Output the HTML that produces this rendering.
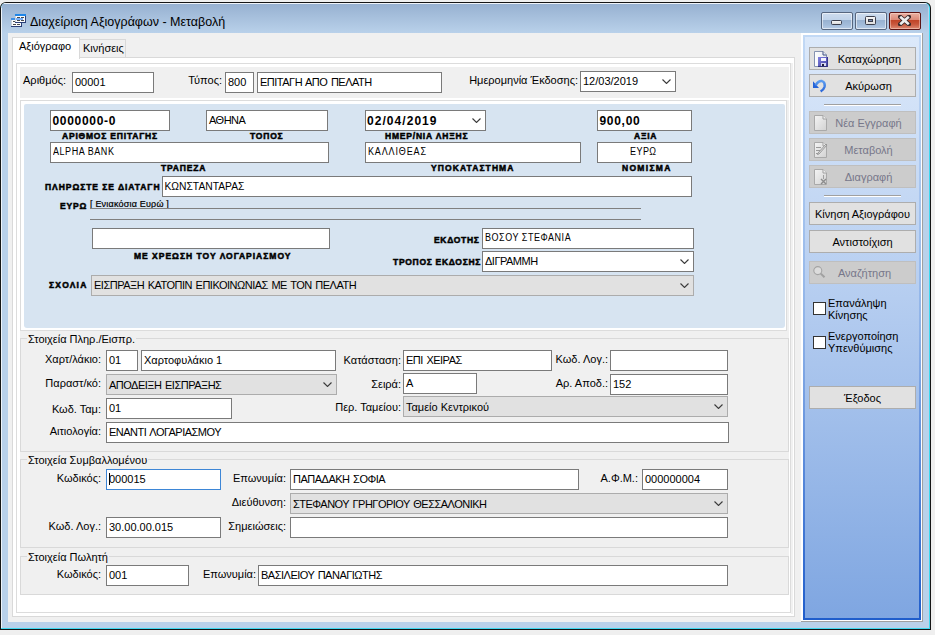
<!DOCTYPE html>
<html><head><meta charset="utf-8">
<style>
*{margin:0;padding:0;box-sizing:border-box}
html,body{width:935px;height:635px;overflow:hidden;background:#efefef;font-family:"Liberation Sans",sans-serif;font-size:11px;color:#000}
.a{position:absolute}
.t{position:absolute;white-space:nowrap;line-height:13px;font-size:11px}
.in{position:absolute;background:#fff;border:1px solid #7a7a7a;white-space:nowrap;font-size:11px;line-height:19px;padding-left:2px;overflow:hidden}
.cb{position:absolute;background:#e1e1e1;border:1px solid #acacac;white-space:nowrap;font-size:11px;line-height:21px;padding-left:2px;overflow:hidden}
.uc{letter-spacing:-0.5px;word-spacing:1px}
.chev{position:absolute;right:4px;top:7px;width:9px;height:5px}
.bl{position:absolute;white-space:nowrap;font-weight:bold;font-size:8.5px;letter-spacing:0.8px;line-height:10px;-webkit-text-stroke:0.5px #000}
.btn{position:absolute;left:809px;width:107px;height:23px;background:#e1e1e1;border:1px solid #adadad;text-align:center;line-height:21px;font-size:11px}
.dis{background:#cccccc;border-color:#bfbfbf;color:#77778a}
.gb{position:absolute;border:1px solid #d9d9d9}
.gt{position:absolute;background:#f0f0f0;padding:0 1px;line-height:13px;white-space:nowrap}
</style></head><body>
<!-- window frame -->
<div class="a" style="left:0;top:2px;width:931px;height:628px;background:#161616;border-radius:6px 6px 0 0"></div>
<div class="a" style="left:1px;top:3px;width:929px;height:626px;background:#3fd8f0;border-radius:5px 5px 0 0"></div>
<div class="a" style="left:1px;top:3px;width:928px;height:625px;background:#b9d1ea;border-radius:5px 5px 0 0"></div>
<div class="a" style="left:1px;top:8px;width:1px;height:620px;background:#eef4fa"></div>
<div class="a" style="left:2px;top:3px;width:926px;height:30px;background:linear-gradient(#eef3f9 0,#eef3f9 1px,#97b1d1 1px,#b9d1ea 100%);border-radius:4px 4px 0 0"></div>
<!-- title -->
<svg class="a" style="left:11px;top:14px" width="16" height="13" viewBox="0 0 16 13">
 <rect x="0" y="4" width="11" height="9" fill="#2a3f78"/>
 <rect x="0" y="4" width="10" height="8" fill="#fbfcfd"/>
 <rect x="0" y="4" width="1" height="8" fill="#c9d2dc"/>
 <rect x="0" y="4" width="10" height="2" fill="#3d8fe6"/>
 <rect x="2" y="7" width="2" height="1" fill="#4a4a4a"/>
 <rect x="2" y="10" width="3" height="1" fill="#4a4a4a"/><rect x="6" y="10" width="3" height="1" fill="#4a4a4a"/>
 <rect x="4" y="0" width="11" height="9" fill="#2a3f78"/>
 <rect x="4" y="0" width="10" height="8" fill="#fbfcfd"/>
 <rect x="4" y="0" width="1" height="8" fill="#c9d2dc"/>
 <rect x="4" y="0" width="11" height="2" fill="#1f86e8"/>
 <rect x="6" y="3" width="3" height="1" fill="#4a4a4a"/><rect x="10" y="3" width="3" height="1" fill="#4a4a4a"/>
 <rect x="5" y="4" width="7" height="2" fill="#7ab0f5"/>
 <rect x="6" y="6" width="3" height="1" fill="#4a4a4a"/><rect x="10" y="6" width="3" height="1" fill="#4a4a4a"/>
</svg>
<div class="t" style="left:30px;top:14px;font-size:12.5px;line-height:16px;color:#000">Διαχείριση Αξιογράφων - Μεταβολή</div>
<!-- caption buttons -->
<div class="a" style="left:821px;top:12px;width:32px;height:18px;border:1px solid #56667f;border-radius:2px;background:linear-gradient(#cddcee 0,#c0d3ea 44%,#97b1d0 44%,#a3bcda 75%,#b6cce6 100%);box-shadow:inset 0 0 0 1px rgba(255,255,255,.55)"></div>
<div class="a" style="left:831px;top:20px;width:11px;height:5px;background:linear-gradient(#f4f4f4,#dcdcdc);border:1px solid #3c3f4c;border-radius:1.5px"></div>
<div class="a" style="left:855px;top:12px;width:32px;height:18px;border:1px solid #56667f;border-radius:2px;background:linear-gradient(#cddcee 0,#c0d3ea 44%,#97b1d0 44%,#a3bcda 75%,#b6cce6 100%);box-shadow:inset 0 0 0 1px rgba(255,255,255,.55)"></div>
<div class="a" style="left:865px;top:16px;width:11px;height:9px;background:linear-gradient(#f6f6f6,#dedede);border:1px solid #3c3f4c;border-radius:1.5px"></div>
<div class="a" style="left:868px;top:19px;width:5px;height:3px;background:#7b8db0;border:1px solid #3c3f4c"></div>
<div class="a" style="left:889px;top:12px;width:32px;height:18px;border:1px solid #5c1414;border-radius:2px;background:linear-gradient(#eab0a2 0,#dc8a78 42%,#bf4124 42%,#c8563c 70%,#dc8a74 100%);box-shadow:inset 0 0 0 1px rgba(255,230,220,.45)"></div>
<svg class="a" style="left:898px;top:15px" width="13" height="11" viewBox="0 0 13 11"><path d="M2.2 1.8 L10.8 9.2 M10.8 1.8 L2.2 9.2" stroke="#3a2a2a" stroke-width="4.4" stroke-linecap="round"/><path d="M2.2 1.8 L10.8 9.2 M10.8 1.8 L2.2 9.2" stroke="#eeeeee" stroke-width="2.6"/></svg>
<div class="a" style="left:8px;top:33px;width:915px;height:589px;background:#f0f0f0"></div>
<div class="a" style="left:79px;top:39px;width:47px;height:19px;background:#f0f0f0;border:1px solid #d9d9d9;border-bottom:none"></div>
<div class="t" style="left:83px;top:42px;">Κινήσεις</div>
<div class="a" style="left:12px;top:57px;width:783px;height:560px;background:#fff;border:1px solid #d9d9d9"></div>
<div class="a" style="left:12px;top:37px;width:68px;height:22px;background:#fff;border:1px solid #d9d9d9;border-bottom:none"></div>
<div class="t" style="left:19px;top:40px;">Αξιόγραφο</div>
<div class="a" style="left:16px;top:63px;width:775px;height:550px;border:1px solid #dcdcdc"></div>
<div class="a" style="left:791px;top:63px;width:2px;height:551px;background:#f1f1f1"></div>
<div class="a" style="left:20px;top:67px;width:769px;height:31px;background:#f0f0f0"></div>
<div class="t" style="left:-134px;top:74px;width:200px;text-align:right;">Αριθμός:</div>
<div class="in" style="left:72px;top:72px;width:82px;height:21px;">00001</div>
<div class="t" style="left:22px;top:74px;width:200px;text-align:right;">Τύπος:</div>
<div class="in" style="left:225px;top:72px;width:29px;height:21px;">800</div>
<div class="in uc" style="left:257px;top:72px;width:185px;height:21px;">ΕΠΙΤΑΓΗ ΑΠΟ ΠΕΛΑΤΗ</div>
<div class="t" style="left:378px;top:74px;width:200px;text-align:right;">Ημερομηνία Έκδοσης:</div>
<div class="in" style="left:580px;top:71px;width:96px;height:21px;">12/03/2019<svg class="chev" width="9" height="5" viewBox="0 0 9 5"><path d="M0.5 0.5 L4.5 4.5 L8.5 0.5" fill="none" stroke="#3a3a3a" stroke-width="1.1"/></svg></div>
<div class="a" style="left:787px;top:100px;width:2px;height:231px;background:#f0f0f0"></div>
<div class="a" style="left:20px;top:100px;width:767px;height:231px;border:1px solid #dcdcdc"></div>
<div class="a" style="left:24px;top:104px;width:761px;height:224px;background:#d7e4f1;border-radius:2px 2px 3px 3px"></div>
<div class="in" style="left:50px;top:110px;width:120px;height:21px;font-weight:bold;font-size:12px;letter-spacing:0.7px;padding-left:1.5px;line-height:21px">0000000-0</div>
<div class="bl" style="left:62px;top:131px;">ΑΡΙΘΜΟΣ ΕΠΙΤΑΓΗΣ</div>
<div class="in uc" style="left:206px;top:110px;width:122px;height:21px;">ΑΘΗΝΑ</div>
<div class="bl" style="left:250px;top:131px;">ΤΟΠΟΣ</div>
<div class="in" style="left:365px;top:110px;width:121px;height:21px;font-weight:bold;font-size:12px;letter-spacing:0.7px;padding-left:1.5px;line-height:21px;letter-spacing:1.05px;padding-left:1px">02/04/2019<svg class="chev" width="9" height="5" viewBox="0 0 9 5"><path d="M0.5 0.5 L4.5 4.5 L8.5 0.5" fill="none" stroke="#3a3a3a" stroke-width="1.1"/></svg></div>
<div class="bl" style="left:385px;top:131px;">ΗΜΕΡ/ΝΙΑ ΛΗΞΗΣ</div>
<div class="in" style="left:597px;top:110px;width:95px;height:21px;font-weight:bold;font-size:12px;letter-spacing:0.7px;padding-left:1.5px;line-height:21px">900,00</div>
<div class="bl" style="left:634px;top:131px;">ΑΞΙΑ</div>
<div class="in" style="left:50px;top:142px;width:279px;height:21px;font-size:10px;line-height:17px"><span style="display:inline-block;transform:scaleX(0.9);transform-origin:0 0;letter-spacing:0.6px">ALPHA BANK</span></div>
<div class="bl" style="left:161px;top:163px;">ΤΡΑΠΕΖΑ</div>
<div class="in" style="left:365px;top:142px;width:216px;height:21px;font-size:10px;line-height:17px;padding-left:1.5px"><span style="display:inline-block;transform:scaleX(0.9);transform-origin:0 0;letter-spacing:0.95px">ΚΑΛΛΙΘΕΑΣ</span></div>
<div class="bl" style="left:431px;top:163px;letter-spacing:1.1px">ΥΠΟΚΑΤΑΣΤΗΜΑ</div>
<div class="in" style="left:597px;top:142px;width:95px;height:21px;font-size:10px;line-height:17px;text-align:center;padding:0 0 0 0"><span style="display:inline-block;transform:scaleX(0.9);transform-origin:0 0;letter-spacing:0.5px">ΕΥΡΩ</span></div>
<div class="bl" style="left:622px;top:163px;letter-spacing:1.3px">ΝΟΜΙΣΜΑ</div>
<div class="bl" style="left:45px;top:182px;letter-spacing:0.95px">ΠΛΗΡΩΣΤΕ ΣΕ ΔΙΑΤΑΓΗ</div>
<div class="in" style="left:162px;top:176px;width:530px;height:21px;font-size:10.3px;padding-left:1.5px">ΚΩΝΣΤΑΝΤΑΡΑΣ</div>
<div class="bl" style="left:60px;top:201px;">ΕΥΡΩ</div>
<div class="t" style="left:90px;top:197px;font-size:9px;letter-spacing:0.2px;-webkit-text-stroke:0.2px #000;line-height:14px">[ Ενιακόσια Ευρώ ]</div>
<div class="a" style="left:90px;top:208px;width:551px;height:1px;background:#808080"></div>
<div class="a" style="left:90px;top:219px;width:551px;height:1px;background:#808080"></div>
<div class="in" style="left:92px;top:228px;width:238px;height:21px;"></div>
<div class="bl" style="left:134px;top:251px;letter-spacing:1px">ΜΕ ΧΡΕΩΣΗ ΤΟΥ ΛΟΓΑΡΙΑΣΜΟΥ</div>
<div class="bl" style="left:434px;top:235px;letter-spacing:0.7px">ΕΚΔΟΤΗΣ</div>
<div class="in" style="left:482px;top:228px;width:212px;height:21px;font-size:10px;line-height:17px"><span style="display:inline-block;transform:scaleX(0.9);transform-origin:0 0;letter-spacing:0.6px">ΒΟΣΟΥ ΣΤΕΦΑΝΙΑ</span></div>
<div class="bl" style="left:393px;top:257px;letter-spacing:0.7px">ΤΡΟΠΟΣ ΕΚΔΟΣΗΣ</div>
<div class="in uc" style="left:482px;top:251px;width:212px;height:21px;">ΔΙΓΡΑΜΜΗ<svg class="chev" width="9" height="5" viewBox="0 0 9 5"><path d="M0.5 0.5 L4.5 4.5 L8.5 0.5" fill="none" stroke="#3a3a3a" stroke-width="1.1"/></svg></div>
<div class="bl" style="left:49px;top:280px;letter-spacing:1.2px">ΣΧΟΛΙΑ</div>
<div class="cb uc" style="left:91px;top:275px;width:603px;height:21px;line-height:18px">ΕΙΣΠΡΑΞΗ ΚΑΤΟΠΙΝ ΕΠΙΚΟΙΝΩΝΙΑΣ ΜΕ ΤΟΝ ΠΕΛΑΤΗ<svg class="chev" width="9" height="5" viewBox="0 0 9 5"><path d="M0.5 0.5 L4.5 4.5 L8.5 0.5" fill="none" stroke="#3a3a3a" stroke-width="1.1"/></svg></div>
<div class="a" style="left:20px;top:331px;width:769px;height:264px;background:#f0f0f0"></div>
<div class="gb" style="left:20px;top:338px;width:769px;height:114px"></div>
<div class="gt" style="left:27px;top:333px">Στοιχεία Πληρ./Εισπρ.</div>
<div class="t" style="left:-99px;top:353px;width:200px;text-align:right;">Χαρτ/λάκιο:</div>
<div class="in" style="left:106px;top:350px;width:32px;height:21px;">01</div>
<div class="in" style="left:141px;top:350px;width:195px;height:21px;">Χαρτοφυλάκιο 1</div>
<div class="t" style="left:201px;top:354px;width:200px;text-align:right;">Κατάσταση:</div>
<div class="in uc" style="left:403px;top:350px;width:149px;height:21px;">ΕΠΙ ΧΕΙΡΑΣ</div>
<div class="t" style="left:408px;top:353px;width:200px;text-align:right;">Κωδ. Λογ.:</div>
<div class="in" style="left:610px;top:350px;width:118px;height:21px;"></div>
<div class="t" style="left:-99px;top:377px;width:200px;text-align:right;">Παραστ/κό:</div>
<div class="cb uc" style="left:106px;top:374px;width:231px;height:21px;">ΑΠΟΔΕΙΞΗ ΕΙΣΠΡΑΞΗΣ<svg class="chev" width="9" height="5" viewBox="0 0 9 5"><path d="M0.5 0.5 L4.5 4.5 L8.5 0.5" fill="none" stroke="#3a3a3a" stroke-width="1.1"/></svg></div>
<div class="t" style="left:201px;top:378px;width:200px;text-align:right;">Σειρά:</div>
<div class="in" style="left:403px;top:373px;width:74px;height:21px;">A</div>
<div class="t" style="left:408px;top:377px;width:200px;text-align:right;">Αρ. Αποδ.:</div>
<div class="in" style="left:610px;top:374px;width:118px;height:21px;">152</div>
<div class="t" style="left:-99px;top:403px;width:200px;text-align:right;">Κωδ. Ταμ:</div>
<div class="in" style="left:106px;top:398px;width:126px;height:21px;">01</div>
<div class="t" style="left:201px;top:401px;width:200px;text-align:right;">Περ. Ταμείου:</div>
<div class="cb" style="left:403px;top:396px;width:325px;height:21px;">Ταμείο Κεντρικού<svg class="chev" width="9" height="5" viewBox="0 0 9 5"><path d="M0.5 0.5 L4.5 4.5 L8.5 0.5" fill="none" stroke="#3a3a3a" stroke-width="1.1"/></svg></div>
<div class="t" style="left:-99px;top:425px;width:200px;text-align:right;">Αιτιολογία:</div>
<div class="in uc" style="left:106px;top:422px;width:623px;height:21px;">ΕΝΑΝΤΙ ΛΟΓΑΡΙΑΣΜΟΥ</div>
<div class="gb" style="left:20px;top:459px;width:769px;height:89px"></div>
<div class="gt" style="left:27px;top:454px">Στοιχεία Συμβαλλομένου</div>
<div class="t" style="left:-99px;top:472px;width:200px;text-align:right;">Κωδικός:</div>
<div class="in" style="left:106px;top:469px;width:115px;height:21px;border-color:#3d86d6">000015</div>
<div class="a" style="left:109px;top:473px;width:1px;height:12px;background:#000"></div>
<div class="t" style="left:86px;top:472px;width:200px;text-align:right;">Επωνυμία:</div>
<div class="in uc" style="left:290px;top:469px;width:289px;height:21px;">ΠΑΠΑΔΑΚΗ ΣΟΦΙΑ</div>
<div class="t" style="left:438px;top:472px;width:200px;text-align:right;">Α.Φ.Μ.:</div>
<div class="in" style="left:642px;top:469px;width:86px;height:21px;">000000004</div>
<div class="t" style="left:86px;top:496px;width:200px;text-align:right;">Διεύθυνση:</div>
<div class="cb uc" style="left:290px;top:493px;width:438px;height:21px;">ΣΤΕΦΑΝΟΥ ΓΡΗΓΟΡΙΟΥ ΘΕΣΣΑΛΟΝΙΚΗ<svg class="chev" width="9" height="5" viewBox="0 0 9 5"><path d="M0.5 0.5 L4.5 4.5 L8.5 0.5" fill="none" stroke="#3a3a3a" stroke-width="1.1"/></svg></div>
<div class="t" style="left:-99px;top:520px;width:200px;text-align:right;">Κωδ. Λογ.:</div>
<div class="in" style="left:106px;top:517px;width:115px;height:21px;">30.00.00.015</div>
<div class="t" style="left:86px;top:520px;width:200px;text-align:right;">Σημειώσεις:</div>
<div class="in" style="left:290px;top:517px;width:438px;height:21px;"></div>
<div class="gb" style="left:20px;top:556px;width:769px;height:39px"></div>
<div class="gt" style="left:27px;top:551px">Στοιχεία Πωλητή</div>
<div class="t" style="left:-99px;top:568px;width:200px;text-align:right;">Κωδικός:</div>
<div class="in" style="left:106px;top:565px;width:83px;height:21px;">001</div>
<div class="t" style="left:56px;top:568px;width:200px;text-align:right;">Επωνυμία:</div>
<div class="in uc" style="left:258px;top:565px;width:470px;height:21px;">ΒΑΣΙΛΕΙΟΥ ΠΑΝΑΓΙΩΤΗΣ</div>
<div class="a" style="left:801px;top:33px;width:122px;height:589px;background:#a0a0a0"></div>
<div class="a" style="left:801px;top:33px;width:121px;height:588px;background:#fff"></div>
<div class="a" style="left:803px;top:35px;width:118px;height:585px;background:linear-gradient(#c2d9f5,#8fb3e8 50%,#1f5dcb)"></div>
<div class="a" style="left:805px;top:37px;width:114px;height:581px;background:linear-gradient(#dce9fa,#b5cdf0 45%,#7fa6e1)"></div>
<div class="btn" style="top:47px;height:23px;line-height:21px;padding-top:1px;padding-left:14px">Καταχώρηση</div>
<svg class="a" style="left:813px;top:50px" width="16" height="18" viewBox="0 0 16 18">
<defs><linearGradient id="dg" x1="0" y1="0" x2="1" y2="0"><stop offset="0" stop-color="#ffffff"/><stop offset="1" stop-color="#e4e8ee"/></linearGradient>
<linearGradient id="fg" x1="0" y1="0" x2="1" y2="1"><stop offset="0" stop-color="#8080e0"/><stop offset="1" stop-color="#4040a0"/></linearGradient></defs>
<path d="M1.5 1.5 H10 L13.5 5 V16.5 H1.5 Z" fill="url(#dg)" stroke="#8592b0"/>
<path d="M10 1.5 V5 H13.5" fill="#e8eef8" stroke="#405080"/>
<rect x="5" y="7" width="10" height="10" fill="url(#fg)"/>
<rect x="5" y="16" width="10" height="1" fill="#30307a"/><rect x="14" y="7" width="1" height="10" fill="#3a3a8a"/>
<rect x="8" y="8" width="5" height="3" fill="#f4f4ff"/>
<rect x="8" y="13" width="5" height="3" fill="#d8d8f0"/><rect x="9" y="14" width="2" height="2" fill="#202040"/>
</svg>
<div class="btn" style="top:74px;height:23px;line-height:21px;padding-top:1px;padding-left:12px">Ακύρωση</div>
<svg class="a" style="left:810px;top:75px" width="20" height="20" viewBox="0 0 20 20">
<path d="M3 6.3 V12.9 H9 Z" fill="#2563d8"/>
<defs><linearGradient id="ug" x1="0" y1="0" x2="0" y2="1"><stop offset="0" stop-color="#5a9cf0"/><stop offset="1" stop-color="#2a66d8"/></linearGradient></defs><path d="M5.5 10.5 C7.5 6.9, 10 5.8, 12 6.1 C14.4 6.6, 15.1 9.5, 14.5 12 C13.8 14.3, 12.4 15.5, 10.6 16.4" fill="none" stroke="url(#ug)" stroke-width="2.5"/>
</svg>
<div class="a" style="left:824px;top:104px;width:77px;height:2px;border-top:1px solid #a0a0a0;border-bottom:1px solid #fff"></div>
<div class="btn dis" style="top:111px;height:23px;line-height:21px;padding-top:1px;padding-left:12px">Νέα Εγγραφή</div>
<svg class="a" style="left:814px;top:115px" width="14" height="17" viewBox="0 0 14 17">
<defs><linearGradient id="gg115" x1="0" y1="0" x2="1" y2="1"><stop offset="0" stop-color="#f4f4f4"/><stop offset="1" stop-color="#d2d2d2"/></linearGradient></defs>
<path d="M0.5 0.5 H9 L12.5 4 V15.5 H0.5 Z" fill="url(#gg115)" stroke="#a9a9a9"/>
<path d="M9 0.5 V4 H12.5" fill="#f0f0f0" stroke="#a0a0a0"/>
</svg>
<div class="btn dis" style="top:138px;height:23px;line-height:21px;padding-top:1px;padding-left:12px">Μεταβολή</div>
<svg class="a" style="left:814px;top:142px" width="14" height="17" viewBox="0 0 14 17">
<defs><linearGradient id="gg142" x1="0" y1="0" x2="1" y2="1"><stop offset="0" stop-color="#f4f4f4"/><stop offset="1" stop-color="#d2d2d2"/></linearGradient></defs>
<path d="M0.5 0.5 H9 L12.5 4 V15.5 H0.5 Z" fill="url(#gg142)" stroke="#a9a9a9"/>
<path d="M9 0.5 V4 H12.5" fill="#f0f0f0" stroke="#a0a0a0"/>
<path d="M2 5.5 H7 M2 8.5 H6 M2 11.5 H5" stroke="#9a9a9a"/><path d="M12 2 L4 11 L3.5 12.5 L5 12 L13 3 Z" fill="#e0e0e0" stroke="#909090" stroke-width="0.9"/></svg>
<div class="btn dis" style="top:165px;height:23px;line-height:21px;padding-top:1px;padding-left:12px">Διαγραφή</div>
<svg class="a" style="left:814px;top:169px" width="14" height="17" viewBox="0 0 14 17">
<defs><linearGradient id="gg169" x1="0" y1="0" x2="1" y2="1"><stop offset="0" stop-color="#f4f4f4"/><stop offset="1" stop-color="#d2d2d2"/></linearGradient></defs>
<path d="M0.5 0.5 H9 L12.5 4 V15.5 H0.5 Z" fill="url(#gg169)" stroke="#a9a9a9"/>
<path d="M9 0.5 V4 H12.5" fill="#f0f0f0" stroke="#a0a0a0"/>
<path d="M7 10 L12 15 M12 10 L7 15" stroke="#8c8c8c" stroke-width="1.4"/><path d="M9.5 6 V10" stroke="#a0a0a0"/></svg>
<div class="a" style="left:824px;top:195px;width:77px;height:2px;border-top:1px solid #a0a0a0;border-bottom:1px solid #fff"></div>
<div class="btn" style="top:202px;height:23px;line-height:21px;padding-top:1px;padding-left:0px">Κίνηση Αξιογράφου</div>
<div class="btn" style="top:230px;height:23px;line-height:21px;padding-top:1px;padding-left:0px">Αντιστοίχιση</div>
<div class="btn dis" style="top:261px;height:23px;line-height:21px;padding-top:1px;padding-left:4px">Αναζήτηση</div>
<svg class="a" style="left:812px;top:265px" width="14" height="14" viewBox="0 0 14 14">
<circle cx="5.8" cy="5.6" r="4" fill="#dcdcdc" stroke="#a4a4a4" stroke-width="1.1"/>
<path d="M8.8 8.6 L12.5 12.3" stroke="#a0a0a0" stroke-width="2"/>
</svg>
<div class="a" style="left:813px;top:302px;width:13px;height:13px;background:#fff;border:1px solid #333"></div>
<div class="t" style="left:828px;top:297px;line-height:12px">Επανάληψη<br>Κίνησης</div>
<div class="a" style="left:813px;top:336px;width:13px;height:13px;background:#fff;border:1px solid #333"></div>
<div class="t" style="left:828px;top:330px;line-height:12px">Ενεργοποίηση<br>Υπενθύμισης</div>
<div class="btn" style="top:386px;height:23px;line-height:21px;padding-top:1px;padding-left:0px">Έξοδος</div>
</body></html>
